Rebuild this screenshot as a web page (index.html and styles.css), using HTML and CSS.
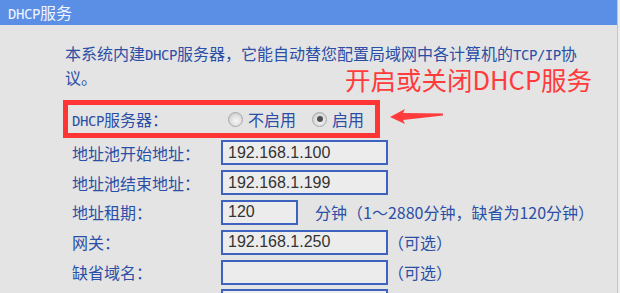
FILE: index.html
```html
<!DOCTYPE html>
<html lang="zh-CN">
<head>
<meta charset="utf-8">
<title>DHCP服务</title>
<link rel="stylesheet" href="styles.css">
</head>
<body>
<div class="panel">
  <div class="title"><span class="lat">DHCP</span>服务</div>
  <div class="content">
    <p class="intro">本系统内建<span class="lat">DHCP</span>服务器，它能自动替您配置局域网中各计算机的<span class="lat">TCP/IP</span>协议。</p>
    <div class="callout">开启或关闭DHCP服务</div>
    <svg class="arrow" width="60" height="22" viewBox="0 0 60 22">
      <polygon points="4,12 19,4 17,8 57,8.5 57,10.5 17,15 19,19" fill="#ff3b3b"/>
    </svg>
    <div class="form">
      <div class="row row-hl">
        <span class="label"><span class="lat">DHCP</span>服务器：</span>
        <div class="radios">
          <span class="radio"></span><span class="rtext">不启用</span>
          <span class="radio checked"></span><span class="rtext">启用</span>
        </div>
      </div>
      <div class="row"><span class="label">地址池开始地址：</span><input class="field" type="text" value="192.168.1.100" readonly></div>
      <div class="row"><span class="label">地址池结束地址：</span><input class="field" type="text" value="192.168.1.199" readonly></div>
      <div class="row"><span class="label">地址租期：</span><input class="field short" type="text" value="120" readonly><span class="hint hint-gap">分钟（1～2880分钟，缺省为120分钟）</span></div>
      <div class="row"><span class="label">网关：</span><input class="field" type="text" value="192.168.1.250" readonly><span class="hint">（可选）</span></div>
      <div class="row"><span class="label">缺省域名：</span><input class="field" type="text" value="" readonly><span class="hint">（可选）</span></div>
      <div class="row"><span class="label">主<span class="lat">DNS</span>服务器：</span><input class="field" type="text" value="0.0.0.0" readonly><span class="hint">（可选）</span></div>
    </div>
  </div>
</div>
</body>
</html>
```

FILE: styles.css
```css
html, body {
  margin: 0;
  padding: 0;
}
body {
  width: 620px;
  height: 293px;
  overflow: hidden;
  background: #ececec;
  font-family: "Noto Sans CJK SC", sans-serif;
  text-autospace: no-autospace;
  text-spacing-trim: space-all;
}
.panel {
  width: 618px;
  height: 293px;
  box-sizing: border-box;
  border-right: 1px solid #c6c6c6;
  background: #e4e4e4;
}
.title {
  height: 25px;
  line-height: 25px;
  background: #5b8fe6;
  color: #f0f4ff;
  font-size: 16px;
  padding-left: 8px;
}
.lat {
  font-family: "DejaVu Sans Mono", monospace;
  font-size: 14px;
  letter-spacing: -0.45px;
}
.content {
  position: relative;
  padding: 17px 0 0 65px;
}
.intro {
  margin: 0;
  width: 520px;
  font-size: 16px;
  line-height: 22px;
  color: #2b4fa6;
}
.callout {
  position: absolute;
  left: 345px;
  top: 39px;
  font-size: 25.5px;
  line-height: 30px;
  color: #ff3b3b;
  white-space: nowrap;
}
.arrow {
  position: absolute;
  left: 386px;
  top: 80px;
}
.form {
  margin: 12px 0 0 -2px;
  display: flex;
  flex-direction: column;
}
.row {
  display: flex;
  align-items: center;
  height: 29.8px;
  padding-left: 9px;
  font-size: 16px;
  color: #2b4fa6;
  white-space: nowrap;
}
.row-hl {
  box-sizing: border-box;
  width: 317px;
  height: 38px;
  border: 5px solid #ff3434;
  padding-left: 4px;
}
.label {
  width: 149px;
  flex-shrink: 0;
}
.radios {
  display: flex;
  align-items: center;
}
.radio {
  width: 15px;
  height: 15px;
  box-sizing: border-box;
  border-radius: 50%;
  border: 1px solid #a8a8a8;
  background: radial-gradient(circle at 55% 60%, #f6f6f6 0, #e2e2e2 45%, #bcbcbc 100%);
  margin-left: 7px;
  position: relative;
}
.radio.checked {
  margin-left: 16px;
}
.radio.checked::after {
  content: "";
  position: absolute;
  left: 3.5px;
  top: 3.5px;
  width: 6px;
  height: 6px;
  border-radius: 50%;
  background: #4e4e4e;
}
.rtext {
  margin-left: 5px;
}
.field {
  width: 167px;
  height: 25px;
  box-sizing: border-box;
  margin: 0;
  border: 2px solid #3e62c0;
  background: #ececec;
  padding: 0 5px;
  font-family: "Liberation Sans", Arial, sans-serif;
  font-size: 16px;
  color: #333333;
  outline: none;
  flex-shrink: 0;
}
.field.short {
  width: 77px;
}
.hint {
  margin-left: 0;
}
.hint-gap {
  margin-left: 17px;
}
```
